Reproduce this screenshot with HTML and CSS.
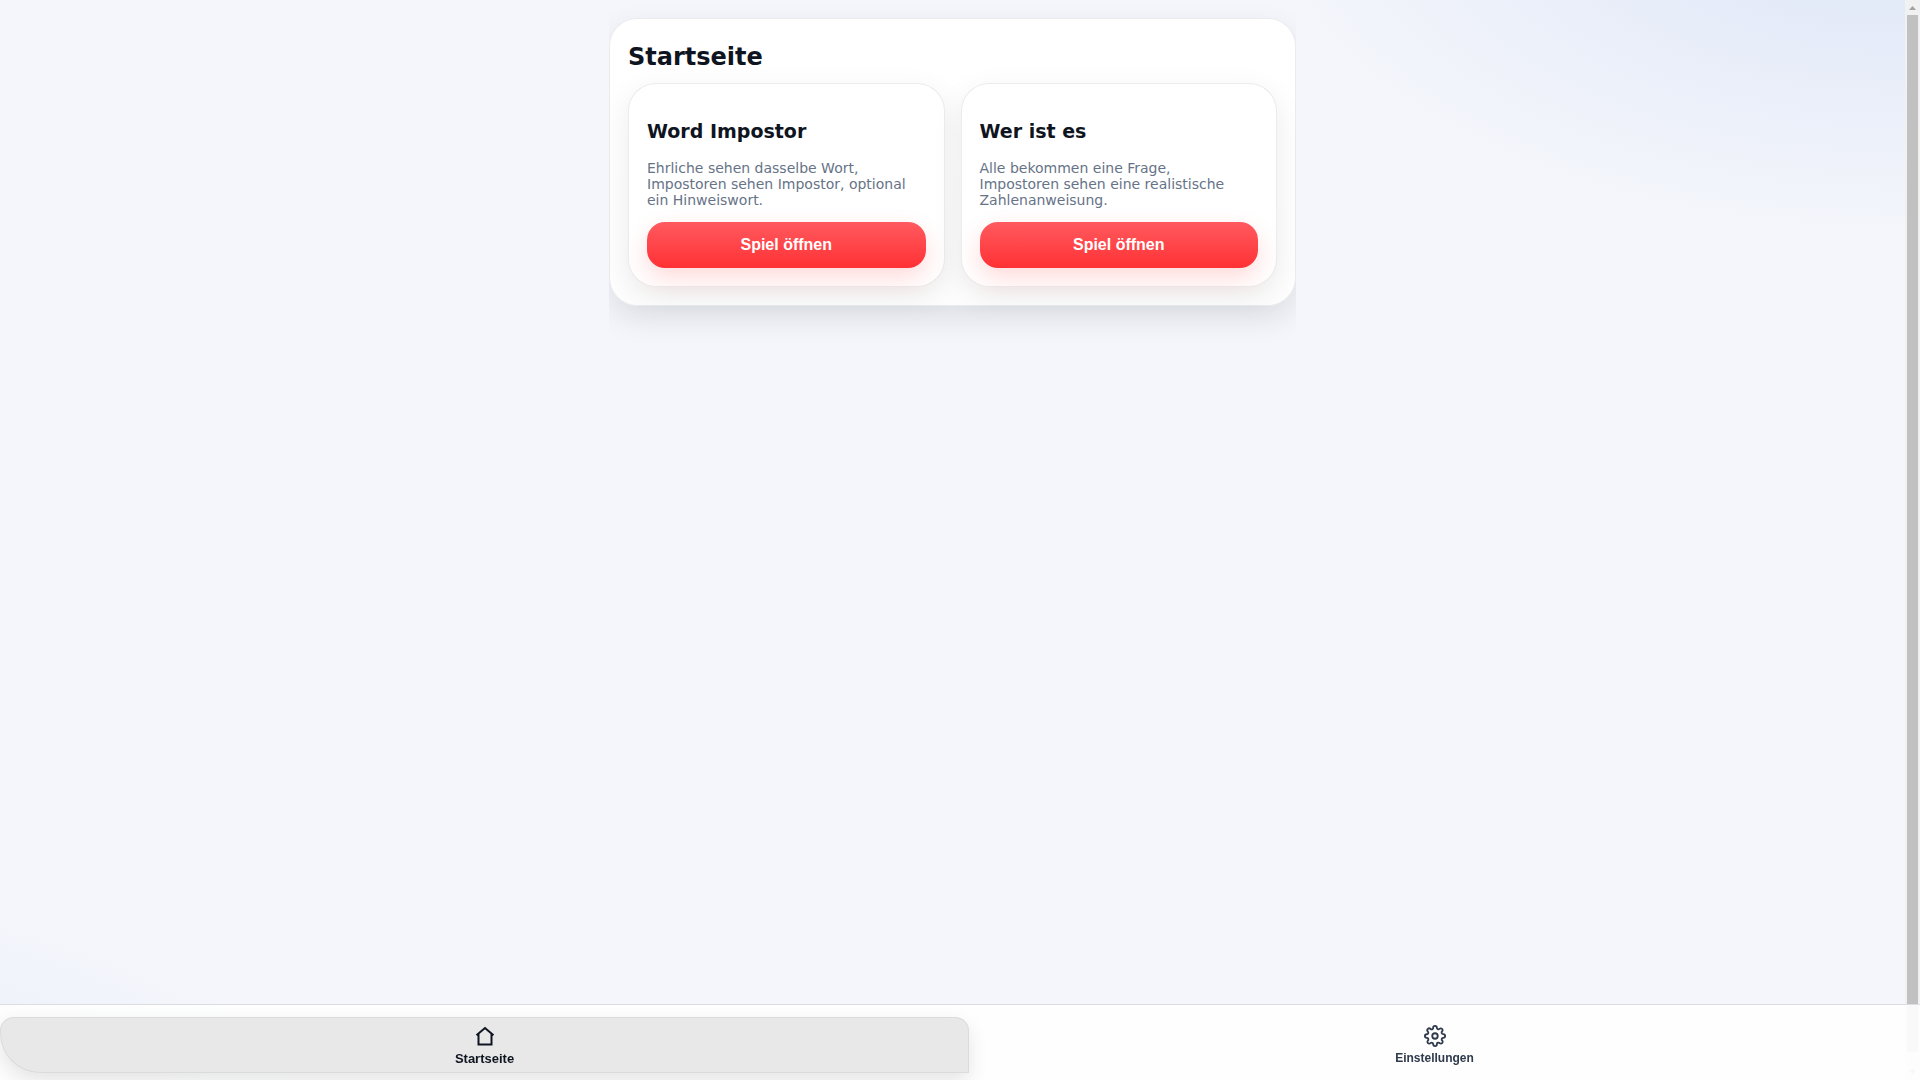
FILE: index.html
```html
<!DOCTYPE html>
<html lang="de">
<head>
<meta charset="utf-8">
<meta name="viewport" content="width=device-width, initial-scale=1">
<title>Startseite</title>
<link rel="stylesheet" href="styles.css">
</head>
<body>
<div class="frame">
  <main class="page">
    <div class="column">
      <section class="panel">
        <h1 class="title">Startseite</h1>
        <div class="games">
          <article class="card">
            <h2 class="card-title">Word Impostor</h2>
            <p class="card-text">Ehrliche sehen dasselbe Wort, Impostoren sehen Impostor, optional ein Hinweiswort.</p>
            <button class="open" type="button">Spiel öffnen</button>
          </article>
          <article class="card">
            <h2 class="card-title">Wer ist es</h2>
            <p class="card-text">Alle bekommen eine Frage, Impostoren sehen eine realistische Zahlenanweisung.</p>
            <button class="open" type="button">Spiel öffnen</button>
          </article>
        </div>
      </section>
    </div>
  </main>
  <div class="scrollbar" aria-hidden="true">
    <svg class="arrow" viewBox="0 0 15 15"><path d="M4 10h7L7.500 6z"/></svg>
    <div class="thumb"></div>
    <svg class="arrow" viewBox="0 0 15 15"><path d="M4 5h7L7.500 9z"/></svg>
  </div>
</div>
<nav class="tabs">
  <button class="tab active" type="button">
    <svg class="icon" viewBox="0 0 22 22" aria-hidden="true"><path d="M2.500 10.200 11 3l8.500 7.200M4.500 9v10.500h13V9"/></svg>
    <span>Startseite</span>
  </button>
  <button class="tab" type="button">
    <svg class="icon" viewBox="0 0 24 24" aria-hidden="true"><circle cx="12" cy="12" r="3"/><path d="M19.400 15a1.650 1.650 0 0 0 .33 1.820l.06.06a2 2 0 1 1-2.830 2.830l-.06-.06a1.650 1.650 0 0 0-1.820-.33 1.650 1.650 0 0 0-1 1.510V21a2 2 0 0 1-4 0v-.09A1.650 1.650 0 0 0 9 19.400a1.650 1.650 0 0 0-1.820.33l-.06.06a2 2 0 1 1-2.830-2.830l.06-.06a1.650 1.650 0 0 0 .33-1.820 1.650 1.650 0 0 0-1.510-1H3a2 2 0 0 1 0-4h.09A1.650 1.650 0 0 0 4.600 9a1.650 1.650 0 0 0-.33-1.820l-.06-.06a2 2 0 1 1 2.830-2.830l.06.06a1.650 1.650 0 0 0 1.820.33H9a1.650 1.650 0 0 0 1-1.510V3a2 2 0 0 1 4 0v.09a1.650 1.650 0 0 0 1 1.510 1.650 1.650 0 0 0 1.820-.33l.06-.06a2 2 0 1 1 2.830 2.830l-.06.06a1.650 1.650 0 0 0-.33 1.820V9a1.650 1.650 0 0 0 1.510 1H21a2 2 0 0 1 0 4h-.09a1.650 1.650 0 0 0-1.510 1z"/></svg>
    <span>Einstellungen</span>
  </button>
</nav>
</body>
</html>
```
FILE: styles.css
```css
* { box-sizing: border-box; }

body {
  margin: 0;
  font-family: "DejaVu Sans", sans-serif;
  color: #0f1421;
}

.frame {
  display: flex;
  height: 100vh;
  overflow: hidden;
}

.page {
  flex: 1;
  background:
    radial-gradient(1100px 580px at 100% -10%, rgba(37, 99, 215, 0.12), transparent 60%),
    radial-gradient(900px 500px at -10% 110%, rgba(37, 99, 235, 0.08), transparent 60%),
    #f4f6fb;
}

.column {
  max-width: 687px;
  min-height: 100%;
  margin: 0 auto;
  padding-top: 18px;
  overflow: hidden;
}

.panel {
  padding: 18px;
  border: 1px solid rgba(15, 15, 20, 0.08);
  border-radius: 28px;
  background: linear-gradient(#fff, #fefefe);
  box-shadow: 0 12px 30px rgba(15, 15, 35, 0.1);
}

.title {
  margin: 4px 0 10px;
  font-size: 24px;
  line-height: 32px;
}

.games {
  display: grid;
  grid-template-columns: 1fr 1fr;
  gap: 16px;
}

.card {
  padding: 18px;
  border: 1px solid rgba(15, 15, 20, 0.08);
  border-radius: 28px;
  background: #fff;
  box-shadow: 0 10px 30px rgba(20, 10, 0, 0.08);
}

.card-title {
  margin: 16px 0;
  font-size: 19px;
  line-height: 26px;
}

.card-text {
  margin: 0 0 14px;
  padding-right: 8px;
  font-size: 14px;
  line-height: 16px;
  color: #667387;
}

.open {
  display: block;
  width: 100%;
  height: 46px;
  border: 0;
  border-radius: 18px;
  background: linear-gradient(#ff5a5f, #ff3134);
  box-shadow: 0 10px 24px rgba(255, 49, 52, 0.18);
  color: #fff;
  font: bold 16px "Liberation Sans", sans-serif;
}

.scrollbar {
  display: flex;
  flex-direction: column;
  width: 15px;
  background: #f1f1f1;
}

.arrow {
  width: 15px;
  height: 15px;
  fill: #a3a3a3;
}

.thumb {
  flex: 1;
  margin: 0 2px 13px;
  background: #c1c1c1;
}

.tabs {
  position: fixed;
  inset: auto 0 0 0;
  display: grid;
  grid-template-columns: 51fr 49fr;
  padding: 12px 20px 7px 0;
  border-top: 1px solid #dcdde1;
  background: rgba(254, 254, 254, 0.92);
}

.tab {
  display: flex;
  flex-direction: column;
  align-items: center;
  justify-content: center;
  gap: 4px;
  height: 56px;
  padding: 0;
  border: 1px solid transparent;
  background: none;
  color: #2f3a4d;
  font: bold 12px "Liberation Sans", sans-serif;
}

.active {
  border-color: rgba(15, 23, 42, 0.06);
  border-radius: 14px 14px 0 40px;
  background: #e8e8e9;
  box-shadow: 0 8px 20px rgba(0, 0, 0, 0.1);
  color: #0f1421;
  font-size: 13px;
}

.icon {
  width: 22px;
  height: 22px;
  fill: none;
  stroke: currentColor;
  stroke-width: 2;
}
```
